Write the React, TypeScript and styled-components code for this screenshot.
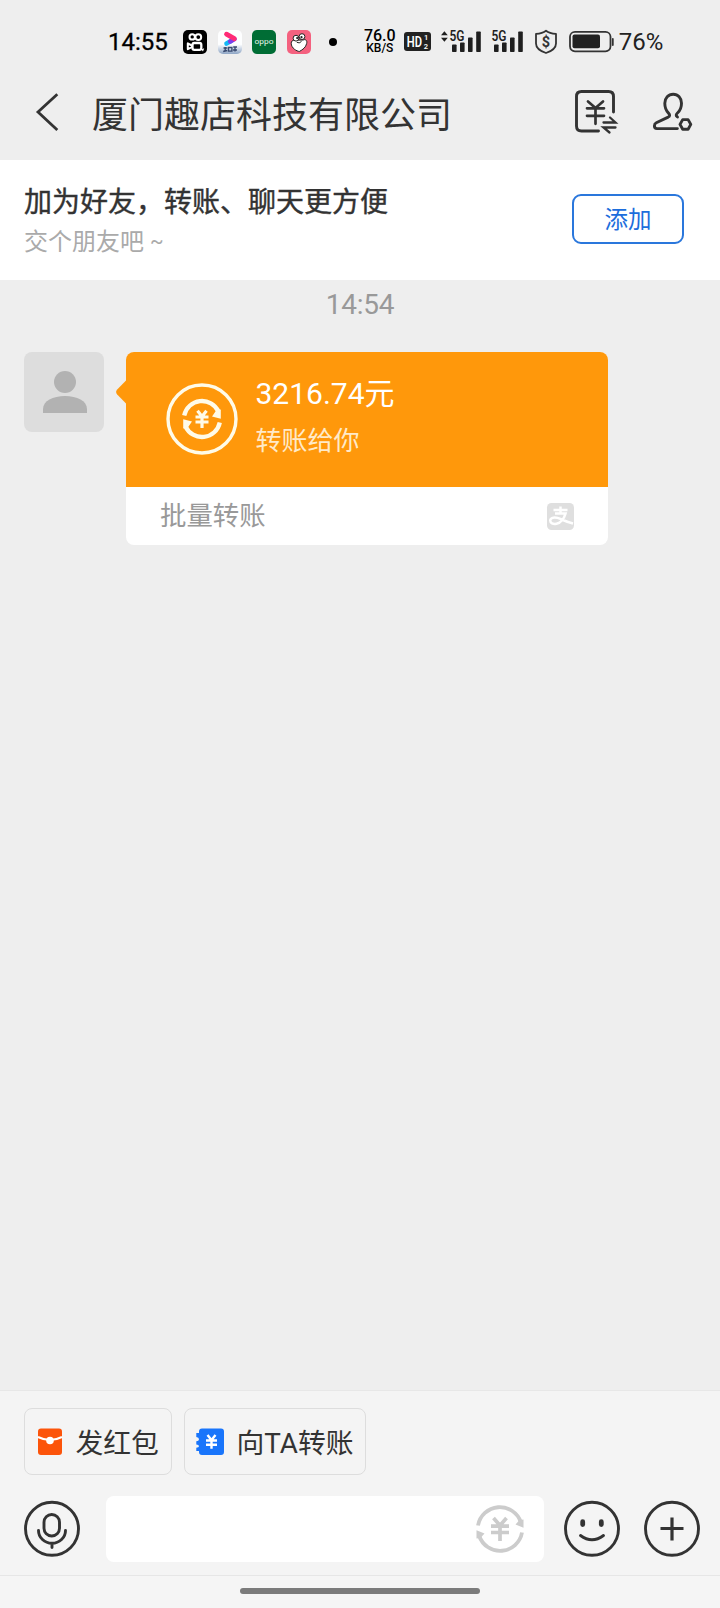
import React from "react";
import styled, { createGlobalStyle } from "styled-components";

const Global = createGlobalStyle`
  * { box-sizing: border-box; }
  body {
    margin: 0;
    background: #eeeeee;
    font-family: Roboto, "Noto Sans CJK SC", sans-serif;
    color: #333333;
  }
  svg { display: block; flex: none; overflow: visible; }
`;

const ink = "#333333";

const Screen = styled.div`
  width: 720px;
  height: 1608px;
  display: flex;
  flex-direction: column;
  background: #eeeeee;
  overflow: hidden;
`;

const StatusBar = styled.header`
  height: 83px;
  padding: 0 56px 0 108px;
  display: flex;
  align-items: center;
  flex: none;
  color: #111111;
`;

const Clock = styled.span`
  width: 75px;
  font-size: 24px;
  line-height: 28px;
  font-weight: 400;
  color: #000000;
  -webkit-text-stroke: 0.3px #000000;
`;

const AppIcons = styled.div`
  display: flex;
  align-items: center;
  gap: 10.6px;
`;

const Dot = styled.i`
  width: 8px;
  height: 8px;
  border-radius: 50%;
  margin-left: 18px;
  background: #000000;
`;

const NetSpeed = styled.div`
  width: 36px;
  margin-left: 25px;
  display: flex;
  flex-direction: column;
  align-items: center;
  font-weight: 500;
  color: #000000;
`;

const SpeedValue = styled.span`
  font-size: 16px;
  line-height: 13px;
`;

const SpeedUnit = styled.span`
  font-size: 12px;
  line-height: 12px;
  font-weight: 500;
`;

const StatusIcon = styled.svg<{ $gap: number }>`
  margin-left: ${(p) => p.$gap}px;
`;

const BatteryText = styled.span`
  margin-left: 4px;
  font-size: 24px;
  line-height: 28px;
  color: #222222;
`;

const TitleBar = styled.nav`
  height: 77px;
  padding: 0 28px 0 35px;
  display: flex;
  align-items: center;
  flex: none;
`;

const TitleText = styled.h1`
  margin: 0 0 0 33px;
  flex: 1;
  font-size: 36px;
  line-height: 44px;
  font-weight: 400;
  padding-bottom: 12px;
`;

const TitleActions = styled.div`
  display: flex;
  gap: 35px;
  padding-bottom: 20px;
`;

const BackSlot = styled.div`
  padding-bottom: 20px;
`;

const FriendBanner = styled.section`
  height: 119.5px;
  padding: 0 36px 0 24px;
  display: flex;
  justify-content: space-between;
  align-items: center;
  flex: none;
  background: #ffffff;
`;

const BannerCopy = styled.div`
  padding-top: 3px;
  display: flex;
  flex-direction: column;
`;

const BannerTitle = styled.strong`
  font-size: 28px;
  line-height: 41px;
  font-weight: 400;
  -webkit-text-stroke: 0.4px #333333;
`;

const BannerHint = styled.span`
  font-size: 24px;
  line-height: 38px;
  color: #aaaaaa;
`;

const Tilde = styled.span`
  font-size: 20px;
  vertical-align: 2px;
  line-height: 1;
`;

const AddButton = styled.button`
  width: 112px;
  height: 50px;
  margin: 0 0 1px;
  padding: 2px 0 0;
  border: 2px solid #2a77dc;
  border-radius: 9px;
  background: #ffffff;
  color: #1c6ddc;
  font-family: inherit;
  font-size: 23.5px;
  line-height: 34px;
`;

const ChatArea = styled.main`
  flex: 1;
  display: flex;
  flex-direction: column;
`;

const TimeLabel = styled.time`
  height: 48px;
  margin-bottom: 24.5px;
  text-align: center;
  font-size: 28px;
  line-height: 49px;
  letter-spacing: -0.2px;
  color: #999999;
`;

const Message = styled.article`
  display: flex;
  padding-left: 24px;
`;

const Avatar = styled.div`
  width: 80px;
  height: 80px;
  border-radius: 8px;
  background: #dddddd;
`;

const BubbleTail = styled.svg`
  margin: 28px 0 0 11px;
`;

const TransferCard = styled.div`
  width: 482px;
  height: 193px;
  border-radius: 8px;
  overflow: hidden;
  background: #ffffff;
`;

const TransferBody = styled.div`
  height: 135px;
  padding: 0 0 1px 40px;
  display: flex;
  align-items: center;
  background: #ff980b;
`;

const TransferCopy = styled.div`
  margin-left: 17.5px;
  padding-bottom: 3px;
  display: flex;
  flex-direction: column;
`;

const Amount = styled.span`
  font-size: 30px;
  line-height: 47px;
  color: #ffffff;
`;

const TransferNote = styled.span`
  font-size: 26px;
  line-height: 48px;
  color: #ffeac8;
`;

const TransferFooter = styled.div`
  height: 58px;
  padding: 0 34px 0;
  display: flex;
  justify-content: space-between;
  align-items: center;
  font-size: 26.4px;
  line-height: 38px;
  color: #999999;
`;

const Composer = styled.footer`
  height: 185px;
  padding: 17px 20px 0 24px;
  border-top: 1px solid #e7e7e7;
  background: #f4f4f4;
  flex: none;
`;

const ChipRow = styled.div`
  display: flex;
  gap: 12px;
`;

const Chip = styled.button<{ $width: number }>`
  width: ${(p) => p.$width}px;
  height: 67px;
  padding: 0 0 0 11px;
  display: flex;
  align-items: center;
  gap: 12.5px;
  border: 1px solid #dddddd;
  border-radius: 8px;
  background: #f4f4f4;
  color: ${ink};
  font-family: inherit;
  font-size: 27.8px;
  line-height: 40px;
  white-space: nowrap;
`;

const ChipLabel = styled.span`
  padding-top: 4px;
`;

const InputRow = styled.div`
  margin-top: 21px;
  display: flex;
  align-items: center;
`;

const InputBox = styled.div`
  width: 438px;
  height: 66px;
  margin: 0 20px 0 26px;
  padding: 0 20px 1px 0;
  display: flex;
  justify-content: flex-end;
  align-items: center;
  border-radius: 8px;
  background: #ffffff;
`;

const EmojiSlot = styled.div`
  margin-right: 24px;
`;

const GestureBar = styled.div`
  height: 33px;
  padding-top: 12px;
  display: flex;
  justify-content: center;
  border-top: 1px solid #e6e6e6;
  background: #f5f5f5;
  flex: none;
`;

const GesturePill = styled.i`
  width: 240px;
  height: 6px;
  border-radius: 3px;
  background: #7b7b7b;
`;

const VideoAppIcon = () => (
  <svg width="24" height="24" viewBox="0 0 24 24">
    <rect width="24" height="24" rx="5" fill="#000" />
    <g fill="none" stroke="#fff" strokeWidth="2">
      <circle cx="9.2" cy="6.9" r="2.7" />
      <circle cx="15.3" cy="7.1" r="2.9" />
      <rect x="9.5" y="13" width="8.8" height="6.8" rx="1.8" strokeWidth="2.3" />
      <path d="M4.8 13.4v5.8l4-2v-1.7z" strokeLinejoin="round" />
    </g>
    <path d="M18.2 19.5l3-1.2-1.2 3.2z" fill="#fff" />
  </svg>
);

const PlayerAppIcon = () => (
  <svg width="24" height="24" viewBox="0 0 24 24">
    <defs>
      <linearGradient id="haze" x1="0" y1="0" x2="0" y2="1">
        <stop offset="0.6" stopColor="#fdfeff" />
        <stop offset="1" stopColor="#8da5c5" />
      </linearGradient>
    </defs>
    <rect width="24" height="24" rx="5" fill="url(#haze)" />
    <path d="M8.5 13.6l4.5-2.5" stroke="#14b9f5" strokeWidth="4.6" strokeLinecap="round" />
    <path d="M12.2 11.5l4.3-2.4" stroke="#7d3ee9" strokeWidth="4.6" strokeLinecap="round" />
    <path d="M8.5 4.2l7.8 4.5" stroke="#ff2b77" strokeWidth="4.8" strokeLinecap="round" />
    <path d="M5.5 18h3.8M7.2 17v4.5M5.2 21.5l4-1M10.5 17.5h3.4v3.6h-3.4zM15.2 17h3.8M17 17v4.6M15 20h4" stroke="#384a70" strokeWidth="1.4" fill="none" />
  </svg>
);

const StoreAppIcon = () => (
  <svg width="24" height="24" viewBox="0 0 24 24">
    <rect width="24" height="24" rx="5" fill="#006d35" />
    <text
      x="12" y="13.5" textAnchor="middle" fill="#e7f6ec" fontFamily="Roboto, sans-serif"
      fontSize="6.5" textLength="19" lengthAdjust="spacingAndGlyphs"
    >
      oppo
    </text>
  </svg>
);

const PinkAppIcon = () => (
  <svg width="24" height="24" viewBox="0 0 24 24">
    <rect width="24" height="24" rx="5" fill="#f4617f" />
    <path
      d="M4.200 13.200c0-2 1.500-3 3-3l9-.2c2.200-1.200 4.200.4 3.500 3.400-1 4.200-3.700 6-7.400 8.100-2.300-.3-8.100-3.100-8.100-8.300z"
      fill="#fff" stroke="#252525" strokeWidth="1"
    />
    <g fill="#fff" stroke="#252525" strokeWidth="1">
      <circle cx="9" cy="8.2" r="2.9" />
      <circle cx="15" cy="6.6" r="2.9" />
    </g>
    <circle cx="10.2" cy="8.1" r="1.1" fill="#222" />
    <circle cx="14.5" cy="7.2" r="1.1" fill="#222" />
    <path d="M9.8 12.3q2.5 1.5 4.7-.8" fill="none" stroke="#252525" />
  </svg>
);

const Signal = ({ arrows, gap }: { arrows?: boolean; gap: number }) => (
  <StatusIcon $gap={gap} width={arrows ? 40 : 32} height="22" viewBox={arrows ? "-8 0 40 22" : "0 0 32 22"}>
    {arrows && (
      <path d="M-8 4.3l3.4-4 3.4 4zM-8 6.8h6.8l-3.4 4z" fill="#1f1f1f" />
    )}
    <text x="0.5" y="10" fontFamily="Roboto, sans-serif" fontWeight="600" fontSize="14" textLength="15" lengthAdjust="spacingAndGlyphs" fill="#1f1f1f">
      5G
    </text>
    <g fill="#1f1f1f">
      <rect x="3" y="13.5" width="4.6" height="7.5" rx="0.8" />
      <rect x="11" y="11.5" width="4.6" height="9.5" rx="0.8" />
      <rect x="19" y="6.5" width="4.6" height="14.5" rx="0.8" />
      <rect x="27.2" y="0.5" width="4.6" height="20.5" rx="0.8" />
    </g>
  </StatusIcon>
);

const HdBadge = () => (
  <StatusIcon $gap={6} width="27" height="19" viewBox="0 0 27 19">
    <rect width="27" height="19" rx="3" fill="#222" />
    <g fill="#fff" fontFamily="Roboto, sans-serif" fontWeight="600">
      <text x="2.8" y="14.8" fontSize="15" textLength="15.2" lengthAdjust="spacingAndGlyphs">HD</text>
      <text x="20" y="8.2" fontSize="7.5">1</text>
      <text x="19.8" y="17" fontSize="7.5">2</text>
    </g>
  </StatusIcon>
);

const Shield = () => (
  <StatusIcon $gap={12} width="22" height="24" viewBox="0 0 22 24">
    <path
      d="M11 .7c2.6 2.1 6.3 3 10 3.2v9.5c0 4.2-4.2 7.6-10 9.6C5.2 21 1 17.6 1 13.4V3.9C4.7 3.7 8.4 2.8 11 .7z"
      fill="none" stroke="#333" strokeWidth="1.8" strokeLinejoin="round"
    />
    <text x="11" y="17" textAnchor="middle" fontFamily="Roboto, sans-serif" fontWeight="700" fontSize="14.5" fill="#333">$</text>
  </StatusIcon>
);

const Battery = () => (
  <StatusIcon $gap={12} width="46" height="22" viewBox="0 0 46 22">
    <rect x="1" y="0.8" width="40.5" height="19.5" rx="5" fill="none" stroke="#333" strokeWidth="1.8" />
    <rect x="3.5" y="3.5" width="27.5" height="13.7" rx="2" fill="#222" />
    <path d="M43.8 8v6" stroke="#333" strokeWidth="1.8" strokeLinecap="round" />
  </StatusIcon>
);

const BackIcon = () => (
  <svg width="24" height="38" viewBox="0 0 24 38">
    <path d="M22.3 1.2L3 19l19.3 18" fill="none" stroke={ink} strokeWidth="2.8" />
  </svg>
);

const BillIcon = () => (
  <svg width="43" height="44" viewBox="0 0 43 44" fill="none" stroke={ink} strokeWidth="2.9" strokeLinecap="round">
    <path d="M38.5 22V6.5q0-5-5-5H6.500q-5 0-5 5v29.500q0 5 5 5h17" />
    <path d="M13 11.5l7.5 6.5 7.5-6.500M12 18.300h17M12 25.800h17M20.500 18.300v15.500" strokeWidth="2.7" />
    <path d="M28.500 32.500h12l-5.500-5M40.500 37.500H28.500l6 5" strokeWidth="2.3" />
  </svg>
);

const ContactIcon = () => (
  <svg width="39" height="44" viewBox="0 0 39 44" fill="none" stroke={ink} strokeWidth="2.9" strokeLinecap="round" strokeLinejoin="round">
    <path d="M24.500 27c-1.800-1.500-1.700-2.500.2-4.300 2.800-2.600 3.800-5.200 3.800-9.400C28.500 8 25 4.200 20.200 4.200S11.800 8 11.800 13.300c0 4.300 1 7.200 3.700 9.800 1.600 1.600 1.500 3-.3 4L3.300 32.800C2 33.400 1.400 34.400 1.400 36c0 1.700 1 2.600 2.600 2.600h20.400" />
    <path d="M29.700 29.600h5.400l2.700 4.800-2.700 4.800h-5.400l-2.700-4.800z" />
  </svg>
);

const PersonIcon = () => (
  <svg width="80" height="80" viewBox="0 0 80 80" fill="#b2b2b2">
    <circle cx="41" cy="30" r="11" />
    <path d="M19 61V57c0-8 10-13 22-13s22 5 22 13v4z" />
  </svg>
);

const TransferBadge = () => (
  <svg width="72" height="72" viewBox="0 0 72 72" fill="none" stroke="#fffbe8">
    <circle cx="36" cy="36" r="34" strokeWidth="3.4" />
    <path d="M18.2 32.5A18.2 18.2 0 0 1 52.5 28.5M53.8 39.5A18.2 18.2 0 0 1 19.5 43.5" strokeWidth="4.3" />
    <path d="M54.800 26.500V35.800L46 33.500L50.500 27zM17.200 45.500V36.200L26 38.500L21.500 45z" fill="#fffbe8" stroke="none" />
    <path d="M31.500 27.800l4.500 5.700 4.500-5.700M29.500 34h13M29.500 39h13M36 33.500v11.500" strokeWidth="3.2" />
  </svg>
);

const AlipayMark = () => (
  <svg width="27" height="27" viewBox="0 0 27 27">
    <rect width="27" height="27" rx="4.5" fill="#dfdfdf" />
    <path d="M13.500 3.500v6M6.500 6.900h14M8 10.600h10.500c-1.200 4.200-4.500 9.300-9 10.200-3.500.7-6.300-.7-6.300-3.200 0-2.700 3.600-3.800 7.300-2.700 4.500 1.300 8.500 4 15.500 5.600" fill="none" stroke="#fff" strokeWidth="2.5" />
  </svg>
);

const RedPacketIcon = () => (
  <svg width="27" height="28" viewBox="0 0 27 28">
    <rect x="2" y="0.5" width="24" height="26.5" rx="3" fill="#fc540a" />
    <path d="M2 9q12 6 24 0" fill="none" stroke="#fff" strokeWidth="2" />
    <circle cx="14" cy="12.5" r="3.8" fill="#fff" />
  </svg>
);

const TransferTicketIcon = () => (
  <svg width="28" height="28" viewBox="0 0 28 28">
    <path
      d="M6 .5h19q3 0 3 3V24q0 3-3 3H6q-3 0-3-3v-1H.3v-3.200Q3 19.500 3 18.200T.3 16.500v-3.300Q3 13 3 11.200T.3 9V5H3V3.500q0-3 3-3z"
      fill="#1975fb"
    />
    <path d="M11.500 7l4 5 4-5M10 12.500h11M10 16.800h11M15.500 12v8.800" fill="none" stroke="#fff" strokeWidth="2.4" />
  </svg>
);

const CircleIcon = ({ children }: { children: React.ReactNode }) => (
  <svg width="56" height="56" viewBox="0 0 56 56" fill="none" stroke={ink} strokeWidth="2.9" strokeLinecap="round">
    <circle cx="28" cy="27.7" r="26.5" />
    {children}
  </svg>
);

const CoinCycleIcon = () => (
  <svg width="48" height="48" viewBox="0 0 48 48" fill="none" stroke="#cccccc">
    <path d="M2 20.5A22.2 22.2 0 0 1 44.8 17M46 27.5A22.2 22.2 0 0 1 3.2 31" strokeWidth="3.8" />
    <path d="M47.500 14.500V22.800L39.500 19.500L43.500 15zM.5 33.500V25.200L8.500 28.500L4.500 33z" fill="#cccccc" stroke="none" />
    <path d="M17.500 13l6.500 7.500 6.500-7.500M15 21.200h18M15 27.500h18M24 20.500v15.500" strokeWidth="3.7" />
  </svg>
);

export default function App() {
  return (
    <>
      <Global />
      <Screen>
        <StatusBar>
          <Clock>14:55</Clock>
          <AppIcons>
            <VideoAppIcon />
            <PlayerAppIcon />
            <StoreAppIcon />
            <PinkAppIcon />
          </AppIcons>
          <Dot />
          <NetSpeed>
            <SpeedValue>76.0</SpeedValue>
            <SpeedUnit>KB/S</SpeedUnit>
          </NetSpeed>
          <HdBadge />
          <Signal arrows gap={10} />
          <Signal gap={10} />
          <Shield />
          <Battery />
          <BatteryText>76%</BatteryText>
        </StatusBar>

        <TitleBar>
          <BackSlot>
            <BackIcon />
          </BackSlot>
          <TitleText>厦门趣店科技有限公司</TitleText>
          <TitleActions>
            <BillIcon />
            <ContactIcon />
          </TitleActions>
        </TitleBar>

        <FriendBanner>
          <BannerCopy>
            <BannerTitle>加为好友，转账、聊天更方便</BannerTitle>
            <BannerHint>
              交个朋友吧 <Tilde>~</Tilde>
            </BannerHint>
          </BannerCopy>
          <AddButton>添加</AddButton>
        </FriendBanner>

        <ChatArea>
          <TimeLabel>14:54</TimeLabel>
          <Message>
            <Avatar>
              <PersonIcon />
            </Avatar>
            <BubbleTail width="11" height="24" viewBox="0 0 11 24">
              <path d="M11.500 0L2.200 9.500Q0 12 2.200 14.500L11.500 24z" fill="#ff980b" />
            </BubbleTail>
            <TransferCard>
              <TransferBody>
                <TransferBadge />
                <TransferCopy>
                  <Amount>3216.74元</Amount>
                  <TransferNote>转账给你</TransferNote>
                </TransferCopy>
              </TransferBody>
              <TransferFooter>
                <span>批量转账</span>
                <AlipayMark />
              </TransferFooter>
            </TransferCard>
          </Message>
        </ChatArea>

        <Composer>
          <ChipRow>
            <Chip $width={148}>
              <RedPacketIcon />
              <ChipLabel>发红包</ChipLabel>
            </Chip>
            <Chip $width={182}>
              <TransferTicketIcon />
              <ChipLabel>向TA转账</ChipLabel>
            </Chip>
          </ChipRow>
          <InputRow>
            <CircleIcon>
              <rect x="20" y="13.5" width="15.5" height="21.5" rx="7.7" />
              <path d="M14.500 29.500a13.500 12.800 0 0 0 27 0M28 42.500v4" />
            </CircleIcon>
            <InputBox>
              <CoinCycleIcon />
            </InputBox>
            <EmojiSlot>
              <CircleIcon>
                <path d="M18.700 20.700v2.800M37.300 20.700v2.800" strokeWidth="4.8" />
                <path d="M16.500 34.500q11.500 8.500 23 0" />
              </CircleIcon>
            </EmojiSlot>
            <CircleIcon>
              <path d="M28 16.500v23M16.500 27.500h23" strokeWidth="3.2" strokeLinecap="butt" />
            </CircleIcon>
          </InputRow>
        </Composer>
        <GestureBar>
          <GesturePill />
        </GestureBar>
      </Screen>
    </>
  );
}
